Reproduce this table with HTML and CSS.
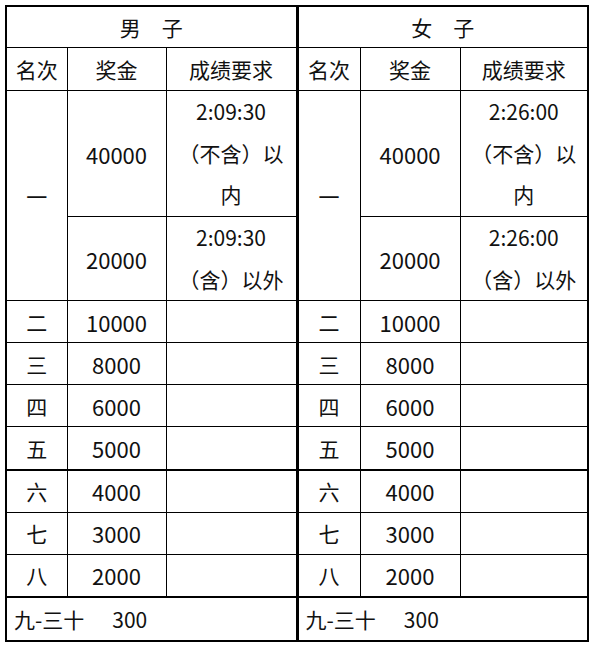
FILE: index.html
```html
<!DOCTYPE html>
<html lang="zh-CN">
<head>
<meta charset="utf-8">
<title>奖金表</title>
<link rel="stylesheet" href="styles.css">
</head>
<body>
<div class="page">
<table class="prize">
  <colgroup>
    <col class="c-rank"><col class="c-money"><col class="c-req">
    <col class="c-rank2"><col class="c-money2"><col class="c-req2">
  </colgroup>
  <tr class="r-head">
    <td colspan="3">男　子</td>
    <td colspan="3" class="mid">女　子</td>
  </tr>
  <tr class="r-sub">
    <td>名次</td><td>奖金</td><td>成绩要求</td>
    <td class="mid">名次</td><td>奖金</td><td>成绩要求</td>
  </tr>
  <tr class="r-a">
    <td rowspan="2">一</td><td class="num">40000</td><td class="multi">2:09:30<br>（不含）以<br>内</td>
    <td rowspan="2" class="mid">一</td><td class="num">40000</td><td class="multi">2:26:00<br>（不含）以<br>内</td>
  </tr>
  <tr class="r-b">
    <td class="num">20000</td><td class="multi">2:09:30<br>（含）以外</td>
    <td class="num">20000</td><td class="multi">2:26:00<br>（含）以外</td>
  </tr>
  <tr class="r-n"><td>二</td><td class="num">10000</td><td></td><td class="mid">二</td><td class="num">10000</td><td></td></tr>
  <tr class="r-n"><td>三</td><td class="num">8000</td><td></td><td class="mid">三</td><td class="num">8000</td><td></td></tr>
  <tr class="r-n"><td>四</td><td class="num">6000</td><td></td><td class="mid">四</td><td class="num">6000</td><td></td></tr>
  <tr class="r-n"><td>五</td><td class="num">5000</td><td></td><td class="mid">五</td><td class="num">5000</td><td></td></tr>
  <tr class="r-n r-thick"><td>六</td><td class="num">4000</td><td></td><td class="mid">六</td><td class="num">4000</td><td></td></tr>
  <tr class="r-n"><td>七</td><td class="num">3000</td><td></td><td class="mid">七</td><td class="num">3000</td><td></td></tr>
  <tr class="r-n"><td>八</td><td class="num">2000</td><td></td><td class="mid">八</td><td class="num">2000</td><td></td></tr>
  <tr class="r-last r-thick">
    <td colspan="3" class="left"><span>九-三十</span><span class="amt">300</span></td>
    <td colspan="3" class="left mid"><span>九-三十</span><span class="amt">300</span></td>
  </tr>
</table>
</div>
</body>
</html>
```
FILE: styles.css
```css
html, body {
  margin: 0;
  padding: 0;
  background: #ffffff;
}

.page {
  padding: 5px 0 0 5px;
}

.prize {
  border-collapse: collapse;
  table-layout: fixed;
  width: 584px;
  border: 2px solid #000;
  font-family: "Noto Sans CJK SC", "Microsoft YaHei", sans-serif;
  font-size: 21px;
  color: #111;
}

.c-rank { width: 61px; }
.c-money { width: 99px; }
.c-req { width: 131px; }
.c-rank2 { width: 63px; }
.c-money2 { width: 100px; }
.c-req2 { width: 128px; }

.prize td {
  border: 1px solid #000;
  text-align: center;
  vertical-align: middle;
  line-height: 26px;
  padding: 0 2px;
  white-space: nowrap;
}

.prize td.num {
  font-size: 22px;
}

.prize td.multi {
  line-height: 41.5px;
}

.prize td.mid {
  border-left: 3px solid #000;
}

.r-head td { height: 40px; }
.r-sub td { height: 42px; }
.r-a td { height: 125px; }
.r-b td { height: 83px; }
.r-n td { height: 41.15px; }
.r-last td { height: 42px; }

.prize tr.r-thick td {
  border-top: 2px solid #000;
}

.prize td.left {
  text-align: left;
  padding-left: 7px;
}

.amt {
  margin-left: 28px;
}
```
